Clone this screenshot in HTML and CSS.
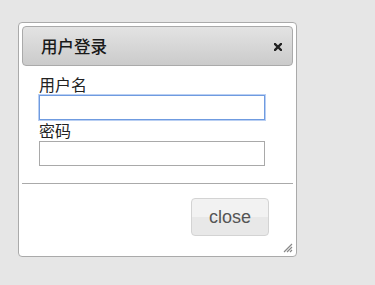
FILE: index.html
```html
<!DOCTYPE html>
<html>
<head>
<meta charset="utf-8">
<link rel="stylesheet" href="styles.css">
</head>
<body>
<div class="dialog">
  <div class="titlebar">
    <span class="title">用户登录</span>
    <svg class="close-icon" width="8" height="8" viewBox="0 0 8 8"><path d="M1 1L7 7M7 1L1 7" stroke="#222" stroke-width="2.4" stroke-linecap="square"/></svg>
  </div>
  <div class="content">
    <label class="label">用户名</label>
    <input class="field focused" type="text">
    <label class="label">密码</label>
    <input class="field" type="password">
  </div>
  <div class="buttonpane">
    <button class="btn">close</button>
  </div>
  <svg class="resize" width="11" height="11" viewBox="0 0 11 11"><path d="M10 2L2 10M10 5L5 10M10 8L8 10" stroke="#888" stroke-width="1.2"/></svg>
</div>
</body>
</html>
```
FILE: styles.css
```css
html, body { margin: 0; }
body {
  background: #e6e6e6;
  padding: 22px 0 0 18px;
  height: 285px;
  box-sizing: border-box;
  font-family: "Liberation Sans", "Noto Sans CJK SC", sans-serif;
}
.dialog {
  position: relative;
  width: 279px;
  height: 235px;
  box-sizing: border-box;
  border: 1px solid #aaaaaa;
  border-radius: 4px;
  background: #fff;
  padding: 3px;
}
.titlebar {
  height: 40px;
  box-sizing: border-box;
  border: 1px solid #aaaaaa;
  border-radius: 4px;
  background: linear-gradient(#e3e3e3, #cbcbcb);
  display: flex;
  align-items: center;
  justify-content: space-between;
  padding: 0 10px 0 18px;
}
.title {
  font-family: "Noto Sans CJK SC", sans-serif;
  font-weight: 500;
  font-size: 16.5px;
  color: #1a1a1a;
  line-height: 20px;
}
.close-icon { display: block; margin-top: 1px; }
.content {
  padding: 8px 0 17px 17px;
}
.label {
  display: block;
  font-family: "Noto Sans CJK SC", sans-serif;
  font-size: 16px;
  line-height: 21px;
  height: 21px;
  color: #222;
}
.field {
  display: block;
  margin: 0;
  width: 226px;
  height: 25px;
  box-sizing: border-box;
  border: 1px solid #a9a9a9;
  padding: 0 2px;
  background: #fff;
  outline: none;
}
.field.focused {
  border-color: #6f9be0;
  box-shadow: 0 0 0 1px #b9cff3;
}
.buttonpane {
  border-top: 1px solid #aaaaaa;
  display: flex;
  justify-content: flex-end;
  padding: 14px 24px 0 0;
}
.btn {
  width: 78px;
  height: 38px;
  box-sizing: border-box;
  border: 1px solid #d3d3d3;
  border-radius: 4px;
  background: linear-gradient(#f2f2f2 50%, #e8e8e8 50%);
  color: #555555;
  font-family: "Liberation Sans", sans-serif;
  font-size: 18px;
  padding: 0;
}
.resize {
  position: absolute;
  right: 3px;
  bottom: 3px;
  display: block;
}
```
